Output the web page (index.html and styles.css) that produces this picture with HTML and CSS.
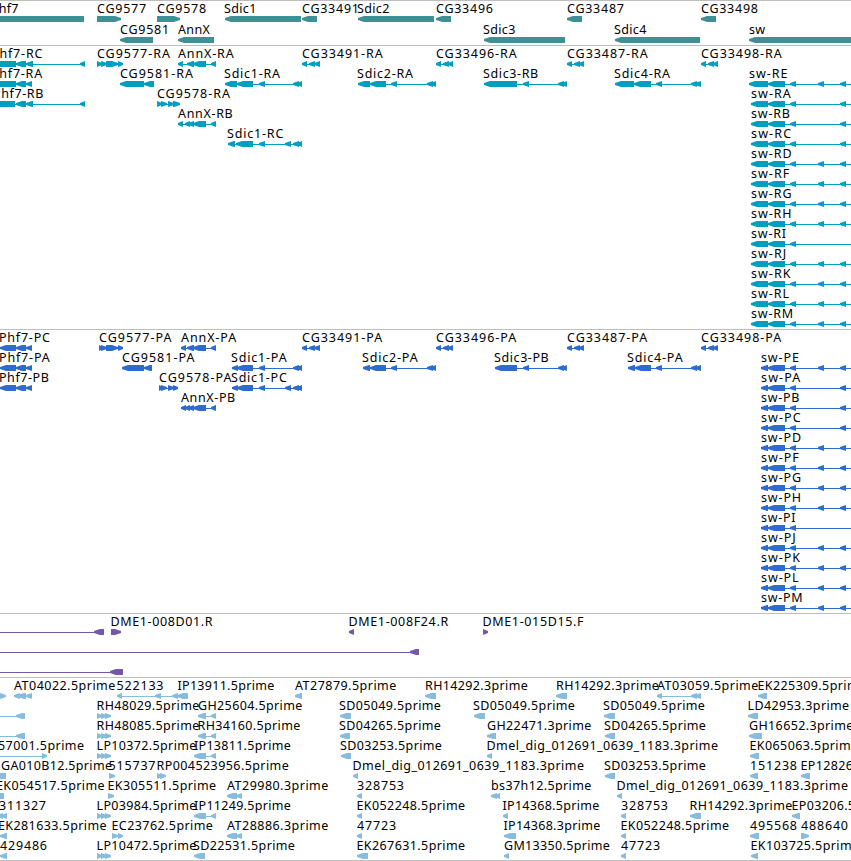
FILE: index.html
```
<!DOCTYPE html>
<html lang="en">
<head>
  <meta charset="UTF-8" />
  <title>Genome Browser</title>
  <link rel="stylesheet" href="styles.css">
</head>
<body>

  <main class="browser">
    <svg class="track genes" id="genes"></svg>
    <svg class="track transcripts" id="transcripts"></svg>
    <svg class="track proteins" id="proteins"></svg>
    <svg class="track clones" id="clones"></svg>
    <svg class="track ests" id="ests"></svg>
  </main>

  <script src="tracks.js"></script>
</body>
</html>
```

FILE: styles.css
```
body {
  margin: 0;
  background: #FFFFFF;
  font-family: 'Noto Sans', 'Open Sans', sans-serif;
  font-size: 12.5px;
  overflow: hidden;
}

.browser {
  display: flex;
  flex-direction: column;
  border-bottom: 1px solid #BEBEBE;
}

.track {
  display: block;
  box-sizing: border-box;
  width: 100%;
  border-top: 1px solid #BEBEBE;
}

.track text {
  fill: #000000;
  white-space: pre;
}

.genes {
  height: 45px;
  fill: #3F8F95;
}

.transcripts {
  height: 284px;
  fill: #009FC0;
}

.proteins {
  height: 284px;
  fill: #2E6BCE;
}

.clones {
  height: 64px;
  fill: #7557A8;
}

.ests {
  height: 183px;
  fill: #87BCDD;
}
```

FILE: tracks.js
```
const SVG = 'http://www.w3.org/2000/svg';

// [row, label, x of label, strand, blocks as start-end pairs, optional line range]
const genes = [
  [0, 'Phf7', -9, '<', [[-10, 84]]],
  [0, 'CG9577', 97, '>', [[97, 121]]],
  [0, 'CG9578', 157, '>', [[157, 180]]],
  [0, 'Sdic1', 224, '<', [[225, 301]]],
  [0, 'CG33491', 302, '<', [[302, 317]]],
  [0, 'Sdic2', 357, '<', [[358, 434]]],
  [0, 'CG33496', 436, '<', [[436, 451]]],
  [0, 'CG33487', 567, '<', [[567, 582]]],
  [0, 'CG33498', 701, '<', [[701, 716]]],
  [1, 'CG9581', 120, '<', [[120, 153]]],
  [1, 'AnnX', 178, '<', [[178, 214]]],
  [1, 'Sdic3', 483, '<', [[484, 565]]],
  [1, 'Sdic4', 614, '<', [[615, 700]]],
  [1, 'sw', 749, '<', [[749, 860]]]
];

const transcripts = [
  [0, 'Phf7-RC', -9, '<', [[-10, 16], [16, 26], [26, 33], [80, 85]]],
  [1, 'Phf7-RA', -9, '<', [[-10, 16], [16, 26], [26, 32]]],
  [2, 'Phf7-RB', -7, '<', [[-10, 15], [16, 26], [26, 33], [80, 85]]],
  [0, 'CG9577-RA', 97, '>', [[97, 102], [101, 107], [106, 118], [118, 123]]],
  [1, 'CG9581-RA', 120, '<', [[120, 144], [144, 154]]],
  [2, 'CG9578-RA', 157, '>', [[157, 162], [161, 167], [168, 174], [173, 180]]],
  [0, 'AnnX-RA', 178, '<', [[178, 183], [187, 194], [193, 206], [211, 216]]],
  [3, 'AnnX-RB', 178, '<', [[178, 183], [185, 190], [188, 194], [193, 206], [211, 216]]],
  [1, 'Sdic1-RA', 224, '<', [[225, 237], [237, 253], [259, 265], [293, 299], [297, 302]]],
  [4, 'Sdic1-RC', 227, '<', [[228, 235], [236, 253], [259, 265], [285, 291], [293, 299], [297, 302]]],
  [0, 'CG33491-RA', 302, '<', [[302, 307], [309, 315], [314, 320]]],
  [1, 'Sdic2-RA', 357, '<', [[358, 370], [370, 386], [391, 397], [427, 433], [431, 436]]],
  [0, 'CG33496-RA', 436, '<', [[436, 441], [443, 449], [448, 453]]],
  [1, 'Sdic3-RB', 483, '<', [[484, 517], [523, 529], [558, 564], [562, 567]]],
  [0, 'CG33487-RA', 567, '<', [[567, 572], [574, 580], [579, 584]]],
  [1, 'Sdic4-RA', 614, '<', [[615, 634], [634, 651], [656, 662], [691, 697], [695, 701]]],
  [0, 'CG33498-RA', 701, '<', [[701, 706], [708, 714], [713, 718]]]
];

const proteins = [
  [0, 'Phf7-PC', -1, '<', [[0, 16], [16, 26], [26, 32]]],
  [1, 'Phf7-PA', -1, '<', [[0, 16], [16, 26], [26, 32]]],
  [2, 'Phf7-PB', -1, '<', [[0, 16], [16, 26], [26, 32]]],
  [0, 'CG9577-PA', 99, '>', [[99, 103], [101, 107], [106, 118], [118, 123]]],
  [1, 'CG9581-PA', 122, '<', [[122, 144], [144, 152]]],
  [2, 'CG9578-PA', 159, '>', [[159, 163], [161, 167], [168, 174], [173, 178]]],
  [0, 'AnnX-PA', 181, '<', [[181, 186], [187, 194], [193, 206], [211, 216]]],
  [3, 'AnnX-PB', 181, '<', [[181, 186], [185, 190], [188, 194], [193, 206], [211, 216]]],
  [1, 'Sdic1-PA', 231, '<', [[232, 238], [237, 253], [259, 265], [293, 299], [297, 302]]],
  [2, 'Sdic1-PC', 231, '<', [[232, 238], [237, 253], [259, 265], [285, 291], [293, 299], [297, 302]]],
  [0, 'CG33491-PA', 302, '<', [[302, 307], [309, 315], [314, 320]]],
  [1, 'Sdic2-PA', 362, '<', [[363, 370], [370, 386], [391, 397], [427, 433], [431, 436]]],
  [0, 'CG33496-PA', 436, '<', [[436, 441], [443, 449], [448, 453]]],
  [1, 'Sdic3-PB', 494, '<', [[495, 517], [523, 529], [558, 564], [562, 567]]],
  [0, 'CG33487-PA', 567, '<', [[567, 572], [574, 580], [579, 584]]],
  [1, 'Sdic4-PA', 627, '<', [[628, 635], [635, 651], [656, 662], [691, 697], [695, 701]]],
  [0, 'CG33498-PA', 701, '<', [[701, 706], [708, 714], [713, 718]]]
];

// sw isoforms, one per row, sharing most exons
const isoforms = 'EABCDFGHIJKLM';
const extraExon = 'EDFGHJKLM';
const noLastExon = 'I';
isoforms.split('').forEach((iso, i) => {
  const exons = [[768, 785], [790, 796]];
  if (extraExon.includes(iso)) exons.push([818, 824]);
  if (!noLastExon.includes(iso)) exons.push([840, 846]);
  const start = iso === 'E' ? 749 : 751;
  transcripts.push([i + 1, 'sw-R' + iso, start, '<', [[start, 768], ...exons], [start + 2, 860]]);
  proteins.push([i + 1, 'sw-P' + iso, 761, '<', [[761, 768], ...exons], [763, 860]]);
});

const clones = [
  [0, '', 0, '<', [[94, 104]], [-10, 96]],
  [0, 'DME1-008D01.R', 110.5, '>', [[111, 121]]],
  [0, 'DME1-008F24.R', 348.5, '<', [[349, 354]]],
  [0, 'DME1-015D15.F', 482.5, '>', [[483, 488]]],
  [1, '', 0, '<', [[410, 419]], [-10, 412]],
  [2, '', 0, '<', [[110, 123]], [-10, 113]]
];

const three = [[97, 102], [101, 107], [105, 111]];
const dig = 'Dmel_dig_012691_0639_1183.3prime';
const ests = [
  [0, '', 0, '>', [[-4, 6]]],
  [0, 'AT04022.5prime', 14, '<', [[14, 20], [18, 26], [26, 32]]],
  [0, '522133', 116.5, '<', [[117, 122], [155, 161]], [119, 175]],
  [0, 'IP13911.5prime', 177.5, '<', [[172, 178], [177, 188]]],
  [0, 'AT27879.5prime', 295, '<', [[295, 302]]],
  [0, 'RH14292.3prime', 425, '<', [[425, 436]]],
  [0, 'RH14292.3prime', 556, '<', [[556, 567]]],
  [0, 'AT03059.5prime', 657, '<', [[657, 662], [691, 697], [695, 701]]],
  [0, 'EK225309.5prime', 757.5, '<', [[758, 767]]],

  [1, '', 0, '<', [[16, 25]], [-10, 18]],
  [1, 'RH48029.5prime', 96.5, '>', three],
  [1, 'GH25604.5prime', 198, '<', [[198, 206], [211, 216]]],
  [1, 'SD05049.5prime', 339, '<', [[340, 351]]],
  [1, 'SD05049.5prime', 473, '<', [[474, 485]]],
  [1, 'SD05049.5prime', 603, '<', [[604, 615]]],
  [1, 'LD42953.3prime', 747.5, '<', [[748, 758]]],

  [2, '', 0, '<', [[16, 25]], [-10, 18]],
  [2, 'RH48085.5prime', 96.5, '>', three],
  [2, 'RH34160.5prime', 197.5, '<', [[198, 206], [211, 216]]],
  [2, 'SD04265.5prime', 339, '<', [[340, 350]]],
  [2, 'GH22471.3prime', 487, '<', [[487, 496]]],
  [2, 'SD04265.5prime', 604, '<', [[605, 615]]],
  [2, 'GH16652.3prime', 749, '<', [[749, 762]]],

  [3, '57001.5prime', -2, '>', [[42, 47]], [-10, 44]],
  [3, 'LP10372.5prime', 96.5, '>', three],
  [3, 'IP13811.5prime', 194, '<', [[194, 206], [211, 216]]],
  [3, 'SD03253.5prime', 340, '<', [[341, 351]]],
  [3, dig, 486.5, '<', [[487, 492]]],
  [3, 'EK065063.5prime', 749.5, '<', [[750, 759]]],

  [4, 'GA010B12.5prime', 1, '<', [[-10, 6]]],
  [4, '515737', 108.5, '>', [[109, 115]]],
  [4, 'RP004523956.5prime', 156.5, '>', [[157, 162], [160, 166]]],
  [4, dig, 352.5, '<', [[353, 358]]],
  [4, 'SD03253.5prime', 604, '<', [[605, 615]]],
  [4, '151238', 750, '<', [[750, 758]]],
  [4, 'EP12826.5prime', 800.5, '<', [[801, 810]]],

  [5, 'EK054517.5prime', -4, '<', [[-10, 4]]],
  [5, 'EK305511.5prime', 107.5, '>', [[108, 114]]],
  [5, 'AT29980.3prime', 227, '<', [[227, 237], [236, 242]]],
  [5, '328753', 357, '<', [[357, 362]]],
  [5, 'bs37h12.5prime', 491, '<', [[491, 497], [495, 500]]],
  [5, dig, 616.5, '<', [[617, 622]]],

  [6, '311327', -1, '<', [[-3, 3], [1, 7]]],
  [6, 'LP03984.5prime', 96.5, '>', three],
  [6, 'IP11249.5prime', 194, '<', [[194, 206], [211, 216]]],
  [6, 'EK052248.5prime', 356.5, '<', [[357, 362]]],
  [6, 'IP14368.5prime', 502.5, '<', [[503, 508]]],
  [6, '328753', 621, '<', [[621, 626]]],
  [6, 'RH14292.3prime', 689.5, '<', [[690, 701]]],
  [6, 'EP03206.5prime', 791.5, '<', [[792, 800]]],

  [7, 'EK281633.5prime', -2, '<', [[0, 7]]],
  [7, 'EC23762.5prime', 111.5, '>', [[112, 118], [118, 123]]],
  [7, 'AT28886.3prime', 227, '<', [[227, 237], [236, 242]]],
  [7, '47723', 357, '<', [[357, 362]]],
  [7, 'IP14368.3prime', 503.5, '<', [[504, 516]]],
  [7, 'EK052248.5prime', 620.5, '<', [[621, 626]]],
  [7, '495568', 750, '<', [[750, 759]]],
  [7, '488640', 801, '>', [[801, 809]]],

  [8, '429486', 0, '<', [[0, 7]]],
  [8, 'LP10472.5prime', 96.5, '>', three],
  [8, 'SD22531.5prime', 193, '<', [[194, 205]]],
  [8, 'EK267631.5prime', 356.5, '<', [[357, 368]]],
  [8, 'GM13350.5prime', 504, '<', [[504, 509]]],
  [8, '47723', 621, '<', [[621, 626]]],
  [8, 'EK103725.5prime', 750.5, '<', [[751, 758]]]
];

// letter widths in em, digits and the dash use the default
const widths = {
  A: 0.67, B: 0.6, C: 0.69, D: 0.73, E: 0.55, F: 0.54, G: 0.74, H: 0.73, I: 0.28,
  J: 0.29, K: 0.64, L: 0.53, M: 0.86, P: 0.58, R: 0.62, S: 0.55, T: 0.56, X: 0.63,
  a: 0.55, c: 0.51, e: 0.56, f: 0.36, g: 0.62, i: 0.28, l: 0.28, m: 0.94, r: 0.42,
  s: 0.52, w: 0.77, _: 0.5, '.': 0.316
};

function labelWidth(label) {
  let em = 0;
  for (const ch of label) em += widths[ch] || 0.632;
  return em * 12.4;
}

function add(parent, tag, attrs) {
  const el = document.createElementNS(SVG, tag);
  for (const key in attrs) el.setAttribute(key, attrs[key]);
  parent.appendChild(el);
  return el;
}

// block with a pointed end in the direction of the strand
function arrow(start, end, strand, y) {
  const head = Math.min(6, end - start);
  const points = strand === '<'
    ? [[start, y + 2], [start + head, y], [end, y], [end, y + 6], [start + head, y + 6], [start, y + 4]]
    : [[end, y + 2], [end - head, y], [start, y], [start, y + 6], [end - head, y + 6], [end, y + 4]];
  return points.join(' ');
}

function drawTrack(id, features, pitch) {
  const svg = document.getElementById(id);
  features.forEach(([row, label, x, strand, blocks, line]) => {
    const top = row * pitch;
    const from = line ? line[0] : blocks[0][0] + 1;
    const to = line ? line[1] : blocks[blocks.length - 1][1] - 1;
    if (line || blocks.length > 1) {
      add(svg, 'rect', { x: from, y: top + 18, width: to - from, height: 1 });
    }
    blocks.forEach(([start, end]) => {
      add(svg, 'polygon', { points: arrow(start, end, strand, top + 15) });
    });
    if (label) {
      add(svg, 'text', { x: x, y: top + 12, textLength: labelWidth(label) }).textContent = label;
    }
  });
}

drawTrack('genes', genes, 21);
drawTrack('transcripts', transcripts, 20);
drawTrack('proteins', proteins, 20);
drawTrack('clones', clones, 20);
drawTrack('ests', ests, 20);
```
